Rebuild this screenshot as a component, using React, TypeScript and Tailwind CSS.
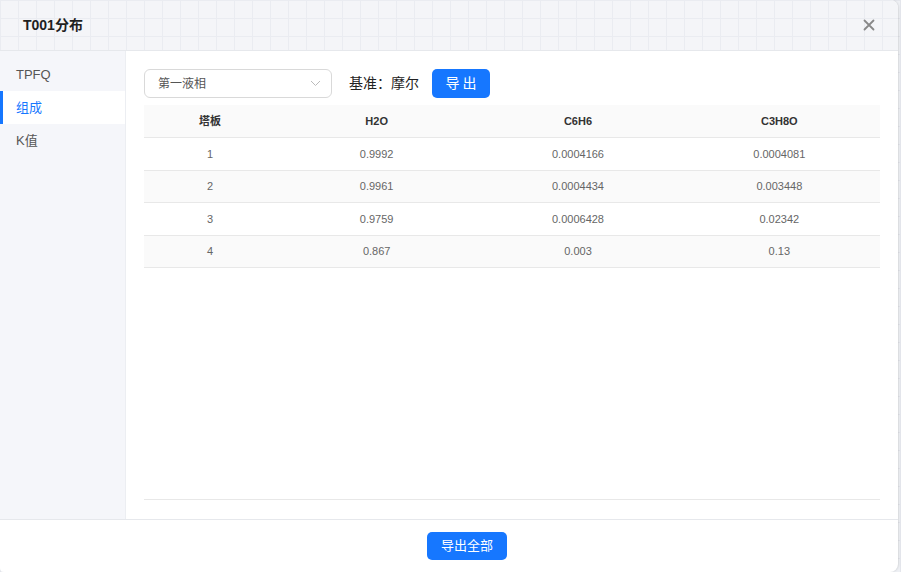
import React from "react";

const rows = [
  ["1", "0.9992", "0.0004166", "0.0004081"],
  ["2", "0.9961", "0.0004434", "0.003448"],
  ["3", "0.9759", "0.0006428", "0.02342"],
  ["4", "0.867", "0.003", "0.13"],
];

export default function App() {
  const font = { fontFamily: '"Liberation Sans", "Noto Sans CJK SC", sans-serif' };
  return (
    <div
      className="w-[901px] h-[572px] bg-[#eef0f4] bg-[linear-gradient(to_right,#e4e6ec_1px,transparent_1px),linear-gradient(to_bottom,#e4e6ec_1px,transparent_1px)] bg-[size:18px_18px] overflow-hidden"
      style={font}
    >
      <div className="w-[898px] h-[572px] flex flex-col bg-white rounded-r-[8px] rounded-bl-[4px] overflow-hidden shadow-[1px_0_2px_rgba(0,0,0,0.1)]">
        {/* Header */}
        <div className="h-[51px] shrink-0 flex items-center justify-between pl-[23px] pr-[23px] border-b border-[#e6e8ec] bg-[#f4f5f8] bg-[linear-gradient(to_right,#eaecf1_1px,transparent_1px),linear-gradient(to_bottom,#eaecf1_1px,transparent_1px)] bg-[size:18px_18px]">
          <div className="text-[14px] font-bold text-[#1f1f1f]">T001分布</div>
          <svg width="12" height="12" viewBox="0 0 12 12" className="text-[#888]">
            <path d="M1.5 1.5 L10.5 10.5 M10.5 1.5 L1.5 10.5" stroke="currentColor" strokeWidth="1.8" strokeLinecap="round" />
          </svg>
        </div>
        {/* Body */}
        <div className="flex flex-1 min-h-0">
          <div className="w-[126px] shrink-0 bg-[#f5f6fa] border-r border-[#eceef2] pt-[7px] text-[13px]">
            <div className="h-[33px] flex items-center pl-[16px] text-[#555]">TPFQ</div>
            <div className="h-[33px] flex items-center pl-[13px] text-[#1677ff] bg-white border-l-[3px] border-[#1677ff]">
              <span>组成</span>
            </div>
            <div className="h-[33px] flex items-center pl-[16px] text-[#555]">K值</div>
          </div>
          <div className="flex-1 pl-[18px] pr-[18px] pt-[18px] flex flex-col">
            <div className="flex items-center h-[29px]">
              <div className="w-[188px] h-[29px] border border-[#d9d9d9] rounded-[6px] flex items-center justify-between pl-[13px] pr-[10px] text-[12px] text-[#555]">
                <span>第一液相</span>
                <svg width="11" height="7" viewBox="0 0 11 7">
                  <path d="M1 1 L5.5 5.5 L10 1" fill="none" stroke="#bbb" strokeWidth="1" />
                </svg>
              </div>
              <span className="ml-[17px] text-[14px] text-[#222]">基准：摩尔</span>
              <button className="ml-[13px] w-[58px] h-[29px] rounded-[5px] bg-[#1677ff] text-white text-[14px] tracking-[3px] pl-[3px]">
                导出
              </button>
            </div>
            <div className="mt-[7px] flex-1 flex flex-col border-b border-[#e8e8e8] mb-[19px]">
              <div className="grid grid-cols-[132px_1fr_1fr_1fr] h-[33px] bg-[#fafafa] border-b border-[#e8e8e8] text-[11px] font-bold text-[#333] items-center text-center">
                <div>塔板</div>
                <div>H2O</div>
                <div>C6H6</div>
                <div>C3H8O</div>
              </div>
              {rows.map((r, i) => (
                <div
                  key={i}
                  className={`grid grid-cols-[132px_1fr_1fr_1fr] h-[32.5px] border-b border-[#e8e8e8] text-[11px] text-[#666] items-center text-center ${i % 2 === 1 ? "bg-[#fafafa]" : "bg-white"}`}
                >
                  {r.map((c, j) => (
                    <div key={j}>{c}</div>
                  ))}
                </div>
              ))}
            </div>
          </div>
        </div>
        {/* Footer */}
        <div className="h-[53px] shrink-0 border-t border-[#e6e8ec] flex items-center justify-center pl-[36px]">
          <button className="w-[80px] h-[28px] rounded-[5px] bg-[#1677ff] text-white text-[13px]">导出全部</button>
        </div>
      </div>
    </div>
  );
}
